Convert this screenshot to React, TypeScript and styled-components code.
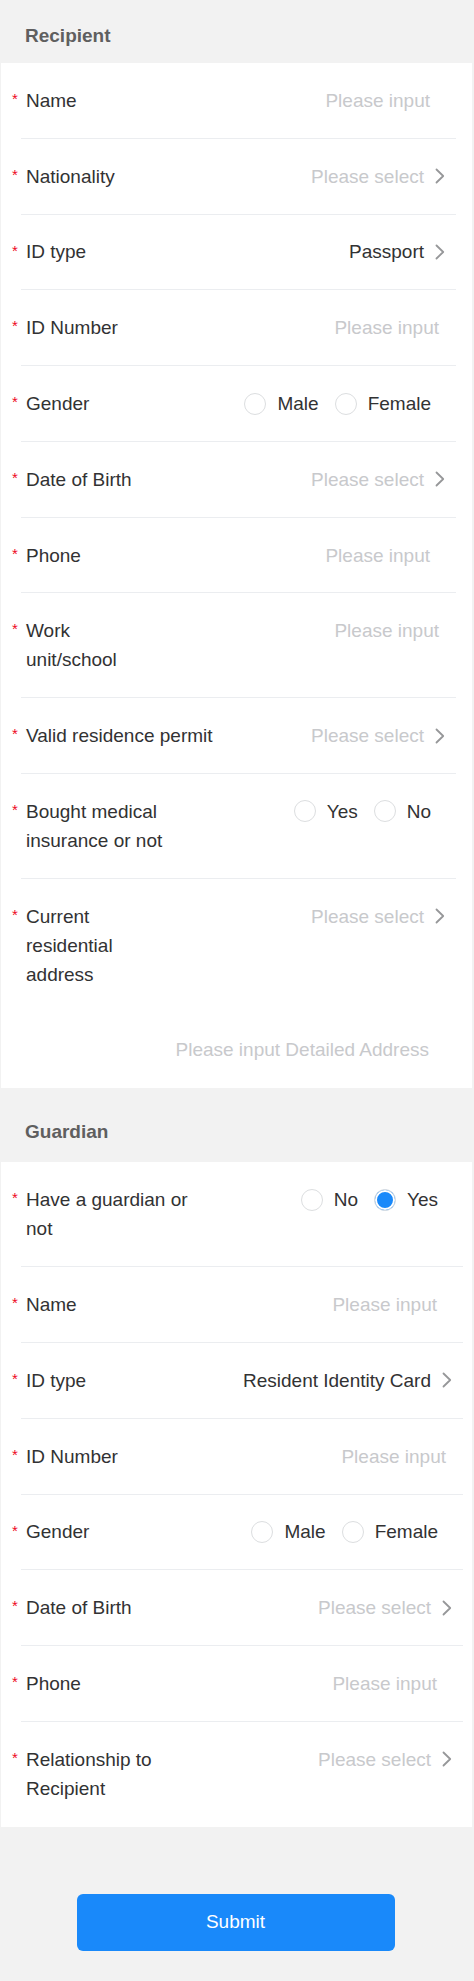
import React from "react";
import styled, { createGlobalStyle } from "styled-components";

// #region styled
const GlobalStyle = createGlobalStyle`
  body {
    margin: 0;
    background-color: #f2f2f2;
    font-family: "Liberation Sans", Arial, sans-serif;
  }
`;

const Page = styled.div`
  background-color: #f2f2f2;
  padding-bottom: 29px;
`;

const SectionTitle = styled.div<{ $top: number; $bottom: number }>`
  padding: ${(p) => p.$top}px 16px ${(p) => p.$bottom}px 25px;

  font-size: 19px;
  line-height: 29px;
  font-weight: bold;
  color: #5f5f5f;
`;

const Card = styled.div`
  margin: 0 2px 0 1px;
  background-color: #ffffff;
`;

const Row = styled.div`
  display: flex;
  align-items: flex-start;
  padding-left: 11px;
`;

const Star = styled.span`
  width: 9px;
  flex-shrink: 0;
  margin-top: 21px;

  font-size: 15px;
  line-height: 29px;
  color: #ee0a24;
`;

const Body = styled.div<{ $right: number; $last?: boolean }>`
  flex: 1;
  display: flex;
  justify-content: space-between;
  align-items: flex-start;
  gap: 12px;

  margin-right: ${(p) => p.$right}px;
  padding: 22.9px 0;

  border-bottom: 1px solid ${(p) => (p.$last ? "transparent" : "#ebedf0")};
`;

const Label = styled.div`
  padding-left: 5px;

  font-size: 19px;
  line-height: 29px;
  color: #323233;
`;

const InputText = styled.div<{ $inset: number }>`
  margin-left: auto;
  margin-right: ${(p) => p.$inset}px;

  font-size: 19px;
  line-height: 29px;
  color: #c8c9cc;
  white-space: nowrap;
`;

const Select = styled.div<{ $filled?: boolean }>`
  display: flex;
  align-items: center;
  gap: 11px;

  margin-left: auto;
  margin-right: 11px;

  font-size: 19px;
  line-height: 29px;
  color: ${(p) => (p.$filled ? "#323233" : "#c8c9cc")};
  white-space: nowrap;
`;

const RadioGroup = styled.div`
  display: flex;
  gap: 16px;

  margin-left: auto;
  margin-right: 25px;
`;

const RadioItem = styled.label`
  display: flex;
  align-items: center;
  gap: 11px;

  font-size: 19px;
  line-height: 29px;
  color: #323233;
`;

const RadioCircle = styled.span<{ $checked?: boolean }>`
  width: 22px;
  height: 22px;
  box-sizing: border-box;

  border: 1px solid #dcdee0;
  border-radius: 50%;

  background-color: ${(p) => (p.$checked ? "#1989fa" : "#ffffff")};
  box-shadow: ${(p) => (p.$checked ? "inset 0 0 0 2px #ffffff" : "none")};
`;

const Footer = styled.div`
  display: flex;
  justify-content: center;
  padding-top: 67px;
  padding-right: 3px;
`;

const SubmitButton = styled.button`
  width: 318px;
  height: 57px;

  border: none;
  border-radius: 6px;
  background-color: #1989fa;

  font-family: "Liberation Sans", Arial, sans-serif;
  font-size: 19px;
  color: #ffffff;
`;
// #endregion styled

type Field =
  | { kind: "input"; label: string[]; inset: number; text?: string; star?: boolean; last?: boolean }
  | { kind: "select"; label: string[]; value?: string; last?: boolean }
  | { kind: "radio"; label: string[]; options: string[]; checked?: string; last?: boolean };

function Chevron() {
  return (
    <svg width="10" height="16" viewBox="0 0 10 16" fill="none">
      <path d="M1.5 1.5L8.2 8L1.5 14.5" stroke="#969799" strokeWidth="1.8" strokeLinecap="round" strokeLinejoin="round" />
    </svg>
  );
}

function FieldRow({ field, right }: { field: Field; right: number }) {
  const star = field.kind === "input" ? field.star !== false : true;
  return (
    <Row>
      <Star>{star ? "*" : ""}</Star>
      <Body $right={right} $last={field.last}>
        {field.label.length > 0 && (
          <Label>
            {field.label.map((line, i) => (
              <div key={i}>{line}</div>
            ))}
          </Label>
        )}
        {field.kind === "input" && <InputText $inset={field.inset}>{field.text ?? "Please input"}</InputText>}
        {field.kind === "select" && (
          <Select $filled={!!field.value}>
            <span>{field.value ?? "Please select"}</span>
            <Chevron />
          </Select>
        )}
        {field.kind === "radio" && (
          <RadioGroup>
            {field.options.map((opt) => (
              <RadioItem key={opt}>
                <RadioCircle $checked={field.checked === opt} />
                <span>{opt}</span>
              </RadioItem>
            ))}
          </RadioGroup>
        )}
      </Body>
    </Row>
  );
}

const recipient: Field[] = [
  { kind: "input", label: ["Name"], inset: 26 },
  { kind: "select", label: ["Nationality"] },
  { kind: "select", label: ["ID type"], value: "Passport" },
  { kind: "input", label: ["ID Number"], inset: 17 },
  { kind: "radio", label: ["Gender"], options: ["Male", "Female"] },
  { kind: "select", label: ["Date of Birth"] },
  { kind: "input", label: ["Phone"], inset: 26 },
  { kind: "input", label: ["Work", "unit/school"], inset: 17 },
  { kind: "select", label: ["Valid residence permit"] },
  { kind: "radio", label: ["Bought medical", "insurance or not"], options: ["Yes", "No"] },
  { kind: "select", label: ["Current", "residential", "address"], last: true },
  { kind: "input", label: [], inset: 27, text: "Please input Detailed Address", star: false, last: true },
];

const guardian: Field[] = [
  { kind: "radio", label: ["Have a guardian or", "not"], options: ["No", "Yes"], checked: "Yes" },
  { kind: "input", label: ["Name"], inset: 26 },
  { kind: "select", label: ["ID type"], value: "Resident Identity Card" },
  { kind: "input", label: ["ID Number"], inset: 17 },
  { kind: "radio", label: ["Gender"], options: ["Male", "Female"] },
  { kind: "select", label: ["Date of Birth"] },
  { kind: "input", label: ["Phone"], inset: 26 },
  { kind: "select", label: ["Relationship to", "Recipient"], last: true },
];

export default function App() {
  return (
    <Page>
      <GlobalStyle />
      <SectionTitle $top={21} $bottom={13}>Recipient</SectionTitle>
      <Card>
        {recipient.map((f, i) => (
          <FieldRow key={i} field={f} right={16} />
        ))}
      </Card>
      <SectionTitle $top={29} $bottom={16}>Guardian</SectionTitle>
      <Card>
        {guardian.map((f, i) => (
          <FieldRow key={i} field={f} right={9} />
        ))}
      </Card>
      <Footer>
        <SubmitButton>Submit</SubmitButton>
      </Footer>
    </Page>
  );
}
